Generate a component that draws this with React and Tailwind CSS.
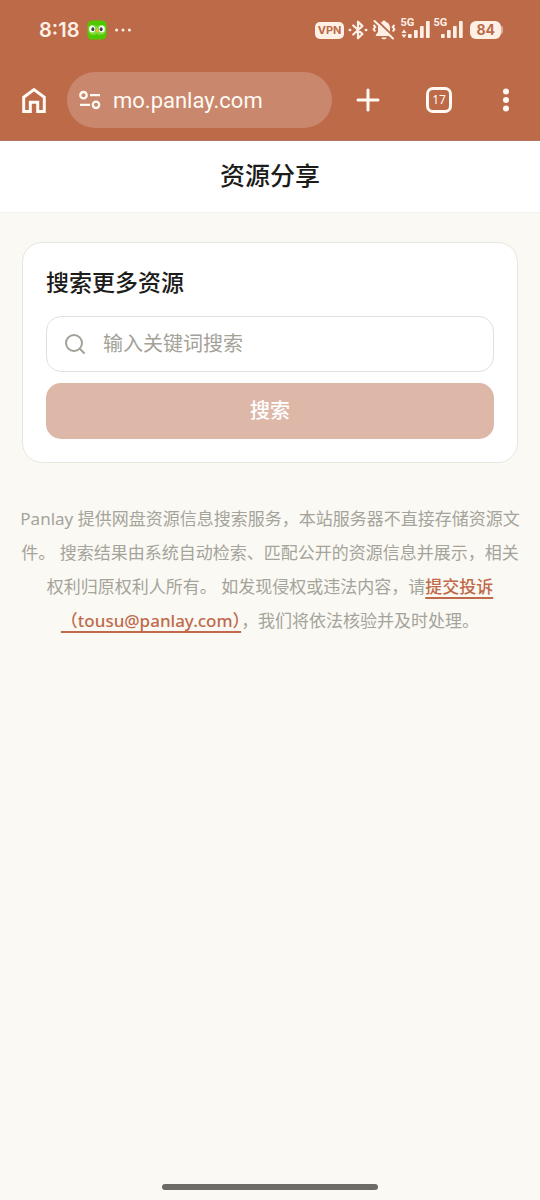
import React, { useState } from "react";
import { Search } from "lucide-react";

function SignalBars({ data }) {
  return (
    <div className="relative h-6 w-[33px]">
      <span className="absolute -top-px left-0 font-[Roboto,sans-serif] text-[11px] leading-3 font-bold">5G</span>
      <svg className="h-6 w-8" viewBox="0 0 32 24" fill="currentColor" aria-hidden="true">
        {data && <path d="M4 11.5l2.6 3.4H1.4zM4 20l2.6-3.4H1.4z" />}
        <rect x="8" y="16" width="3.7" height="4" rx="0.8" />
        <rect x="14" y="12" width="3.7" height="8" rx="0.8" />
        <rect x="20" y="8" width="3.7" height="12" rx="0.8" />
        <rect x="26" y="3" width="3.7" height="17" rx="0.8" />
      </svg>
    </div>
  );
}

function StatusBar() {
  return (
    <div className="flex h-15 items-center justify-between pr-[37px] pl-[39px] text-[#fff0e6]">
      <div className="flex items-center gap-2">
        <span className="font-[Inter,sans-serif] text-[20px] leading-6 font-semibold">8:18</span>
        <svg className="size-5" viewBox="0 0 20 20" aria-hidden="true">
          <rect x="0.5" y="0.5" width="19" height="19" rx="4.5" fill="#50c800" />
          <path d="M1.5 6.5c2.5-2 6-2 8.5 0 2.5-2 6-2 8.5 0v5c-1 4-6.5 4.5-8.5 2-2 2.5-7.5 2-8.5-2z" fill="#7edb35" />
          <ellipse cx="5.2" cy="9" rx="3" ry="3.5" fill="#fff" />
          <ellipse cx="14.8" cy="9" rx="3" ry="3.5" fill="#fff" />
          <ellipse cx="5.9" cy="9.2" rx="1.5" ry="2" fill="#3b4148" />
          <ellipse cx="14.1" cy="9.2" rx="1.5" ry="2" fill="#3b4148" />
          <path d="M8.4 9.8q1.6-1.4 3.2 0L10 12.8z" fill="#ffb81c" />
        </svg>
        <svg className="h-5 w-4" viewBox="0 0 16 20" fill="currentColor" aria-hidden="true">
          <circle cx="1.6" cy="10" r="1.5" />
          <circle cx="8" cy="10" r="1.5" />
          <circle cx="14.4" cy="10" r="1.5" />
        </svg>
      </div>
      <div className="flex items-center gap-1">
        <span className="rounded-[5px] bg-[#fff0e6] px-[3px] font-[Inter,sans-serif] text-[11px] leading-[17px] font-bold text-[#bc6a48]">
          VPN
        </span>
        <svg className="h-5 w-5" viewBox="0 0 20 20" fill="none" stroke="currentColor" strokeWidth="2.2" strokeLinejoin="round" strokeLinecap="round" aria-hidden="true">
          <path d="M5.2 5.5l9.3 8.5L10 18.3V1.7l4.5 4.3-9.3 8.5" />
          <path d="M1.8 10h.3M17.9 10h.3" strokeWidth="2.6" />
        </svg>
        <svg className="h-6 w-6" viewBox="0 0 24 24" fill="none" stroke="currentColor" aria-hidden="true">
          <path d="M12 2.5c-1 0-1.7.6-1.9 1.500C7.400 4.800 6 7 6 9.500v4.500l-2.200 3v1h16.400v-1L18 14V9.500c0-2.500-1.400-4.700-4.100-5.500-.2-.9-.9-1.500-1.900-1.500z" fill="currentColor" stroke="none" />
          <path d="M9.8 20q2.2 2 4.4 0z" fill="currentColor" strokeWidth="1" />
          <path d="M1.5 7l1.8 2-1.8 2.2 1.8 2.3M22.5 7l-1.800 2 1.800 2.200-1.800 2.300" strokeWidth="1.9" />
          <path d="M4.5 2l18 17.5" stroke="#bc6a48" strokeWidth="2" />
          <path d="M2.5 3l18.5 17.5" strokeWidth="2.1" strokeLinecap="round" />
        </svg>
        <div className="flex">
          <SignalBars data />
          <SignalBars />
        </div>
        <div className="flex items-center">
          <span className="rounded-md bg-[#fff0e6] px-[6px] font-[Inter,sans-serif] text-[14px] leading-[18px] font-bold text-[#bc6a48]">
            84
          </span>
          <span className="h-2 w-[2px] rounded-r-sm bg-[#dfae99]" />
        </div>
      </div>
    </div>
  );
}

function Toolbar() {
  return (
    <div className="flex h-20 items-center pr-[2px] pl-[10px] text-[#fffaf3]">
      <button type="button" aria-label="主页" className="mr-[9px] flex size-12 shrink-0 items-center justify-center">
        <svg className="size-7" viewBox="0 0 28 28" fill="none" stroke="currentColor" strokeWidth="3" aria-hidden="true">
          <path d="M3.7 11.3L14 3.6l10.3 7.7v14.2h-6.6v-9.3h-7.4v9.3H3.7z" />
        </svg>
      </button>
      <div className="flex h-14 min-w-0 flex-1 items-center gap-3 rounded-full bg-[#c9876d] pl-3">
        <svg className="h-5 w-[22px] shrink-0" viewBox="0 0 22 20" fill="none" stroke="currentColor" strokeWidth="2.3" aria-hidden="true">
          <circle cx="4.5" cy="5.2" r="3.2" />
          <path d="M11 5.2h10M1 14.8h10" />
          <circle cx="17" cy="14.8" r="3.2" />
        </svg>
        <input
          aria-label="网址"
          defaultValue="mo.panlay.com"
          className="w-full min-w-0 bg-transparent pt-[2px] font-[Roboto,sans-serif] text-[22px] leading-8 outline-none"
        />
      </div>
      <button type="button" aria-label="新标签页" className="flex h-12 w-18 shrink-0 items-center justify-center">
        <svg className="size-6" viewBox="0 0 24 24" fill="none" stroke="currentColor" strokeWidth="3" strokeLinecap="round" aria-hidden="true">
          <path d="M12 2v20M2 12h20" />
        </svg>
      </button>
      <button type="button" aria-label="切换标签页" className="flex h-12 w-[70px] shrink-0 items-center justify-center">
        <span className="flex size-[26px] items-center justify-center rounded-[7px] border-3 border-current text-[12px] leading-4">17</span>
      </button>
      <button type="button" aria-label="更多" className="flex h-12 w-16 shrink-0 items-center justify-center">
        <svg className="size-6" viewBox="0 0 24 24" fill="currentColor" aria-hidden="true">
          <circle cx="12" cy="3.5" r="3" />
          <circle cx="12" cy="12" r="3" />
          <circle cx="12" cy="20.5" r="3" />
        </svg>
      </button>
    </div>
  );
}

export default function App() {
  const [keyword, setKeyword] = useState("");

  return (
    <div className="flex min-h-screen flex-col bg-[#faf9f4] font-['Noto_Sans','Noto_Sans_CJK_SC',sans-serif]" lang="zh-CN">
      <div className="border-b border-[#b5745e] bg-[#bc6a48]">
        <StatusBar />
        <Toolbar />
      </div>

      <header className="border-b border-[#f3f2ec] bg-white pt-4 pb-[19px]">
        <h1 className="text-center text-[25px] leading-9 font-medium text-[#1c1c1a]">资源分享</h1>
      </header>

      <main className="pt-[29px]">
        <form
          onSubmit={(e) => e.preventDefault()}
          className="mx-[22px] flex flex-col rounded-[20px] border border-[#e8e6df] bg-white p-[23px]"
        >
          <h2 className="mb-[18px] text-[23px] leading-8 font-medium text-[#1c1c1a]">搜索更多资源</h2>
          <label className="mb-[11px] flex h-14 items-center gap-4 rounded-[15px] border border-[#e2e0da] bg-white px-4 text-[#a3a198]">
            <Search className="size-6 shrink-0" strokeWidth={2} aria-hidden="true" />
            <input
              type="text"
              aria-label="输入关键词搜索"
              placeholder="输入关键词搜索"
              value={keyword}
              onChange={(e) => setKeyword(e.target.value)}
              className="w-full min-w-0 text-[20px] leading-7 text-[#1c1c1a] outline-none placeholder:text-[#a3a198]"
            />
          </label>
          <button type="submit" className="h-14 rounded-[15px] bg-[#ddb7a8] text-[20px] leading-7 font-medium text-white">
            搜索
          </button>
        </form>

        <p className="mx-5 mt-[39px] text-center text-[17px] leading-[34px] text-[#a5a49a]">
          Panlay 提供网盘资源信息搜索服务，本站服务器不直接存储资源文件。 搜索结果由系统自动检索、匹配公开的资源信息并展示，相关权利归原权利人所有。{" "}
          <span>如发现侵权或违法内容，请</span>
          <a href="mailto:tousu@panlay.com" className="font-medium text-[#c06a4b] underline decoration-2 underline-offset-4">
            提交投诉<span>（tousu@panlay.com）</span>
          </a>
          <span>，我们将依法核验并及时处理。</span>
        </p>
      </main>

      <div className="mx-auto mt-auto mb-[10px] h-[6px] w-2/5 rounded-full bg-[#6c6b66]" />
    </div>
  );
}
